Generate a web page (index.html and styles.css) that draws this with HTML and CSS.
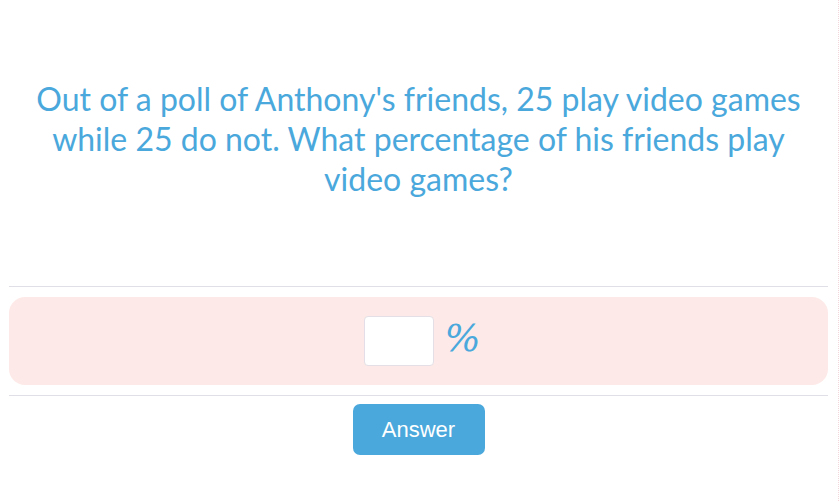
FILE: index.html
```html
<!DOCTYPE html>
<html lang="en">
<head>
  <meta charset="UTF-8" />
  <title>Percentage question</title>
  <link rel="stylesheet" href="styles.css">
</head>
<body>
  <div class="page">
    <div class="question">
      <p>Out of a poll of Anthony's friends, 25 play video games while 25 do not. What percentage of his friends play video games?</p>
    </div>
    <div class="answer-box">
      <input type="text" class="answer-input" />
      <span class="unit">%</span>
    </div>
    <div class="actions">
      <button type="button" class="answer-btn">Answer</button>
    </div>
  </div>
</body>
</html>
```

FILE: styles.css
```css
:root {
  --blue: #4aa8dc;
  --line: #e0dee6;
  --pink: #fdeae8;
}

html, body {
  margin: 0;
  padding: 0;
  background: #fff;
}

.page {
  width: 839px;
  height: 501px;
  box-sizing: border-box;
  padding: 0 10px 0 9px;
  border-right: 1px dotted #f2d6dc;
}

.question {
  height: 286px;
  border-bottom: 1px solid var(--line);
  display: flex;
  align-items: center;
  justify-content: center;
}

.question p {
  margin: 0 0 8px;
  padding: 0 10px;
  font-family: Lato, sans-serif;
  font-size: 32px;
  line-height: 40px;
  color: var(--blue);
  text-align: center;
}

.answer-box {
  margin-top: 10px;
  height: 88px;
  background: var(--pink);
  border-radius: 16px;
  display: flex;
  align-items: center;
  justify-content: center;
  gap: 10px;
}

.answer-input {
  width: 70px;
  height: 50px;
  box-sizing: border-box;
  border: 1px solid #e4dfe6;
  border-radius: 4px;
  background: #fff;
  margin-left: 8px;
}

.unit {
  font-family: "DejaVu Serif", serif;
  font-style: italic;
  font-size: 38px;
  line-height: 1;
  color: var(--blue);
  margin-top: -6px;
}

.actions {
  margin-top: 10px;
  border-top: 1px solid var(--line);
  padding-top: 8px;
  display: flex;
  justify-content: center;
}

.answer-btn {
  width: 132px;
  height: 51px;
  background: var(--blue);
  color: #fff;
  border: none;
  border-radius: 7px;
  font-family: "Liberation Sans", Arial, sans-serif;
  font-size: 22px;
  cursor: pointer;
}
```
